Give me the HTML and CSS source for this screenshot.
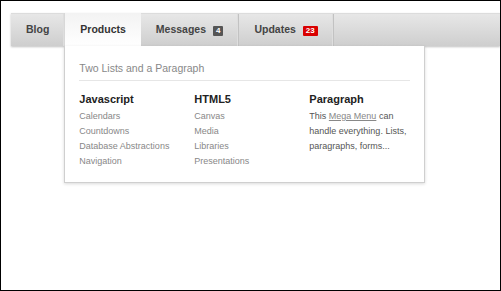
FILE: index.html
```html
<!DOCTYPE html>
<html lang="en">
<head>
    <meta charset="UTF-8">
    <title>Mega Menu</title>
    <link rel="stylesheet" href="styles.css">
</head>
<body>
    <div class="frame">
        <ul class="nav">
            <li class="nav-item">Blog</li>
            <li class="nav-item active">
                Products
                <div class="dropdown">
                    <h2 class="dropdown-title">Two Lists and a Paragraph</h2>
                    <div class="columns">
                        <div class="col">
                            <h3>Javascript</h3>
                            <ul class="links">
                                <li>Calendars</li>
                                <li>Countdowns</li>
                                <li>Database Abstractions</li>
                                <li>Navigation</li>
                            </ul>
                        </div>
                        <div class="col">
                            <h3>HTML5</h3>
                            <ul class="links">
                                <li>Canvas</li>
                                <li>Media</li>
                                <li>Libraries</li>
                                <li>Presentations</li>
                            </ul>
                        </div>
                        <div class="col">
                            <h3>Paragraph</h3>
                            <p class="text">This <a href="#">Mega Menu</a> can handle everything. Lists, paragraphs, forms...</p>
                        </div>
                    </div>
                </div>
            </li>
            <li class="nav-item">Messages <span class="badge">4</span></li>
            <li class="nav-item">Updates <span class="badge badge-red">23</span></li>
        </ul>
    </div>
</body>
</html>
```

FILE: styles.css
```css
* {
    margin: 0;
    padding: 0;
    box-sizing: border-box;
}

body {
    font-family: 'Liberation Sans', Arial, sans-serif;
    background: #fff;
}

.frame {
    width: 501px;
    height: 291px;
    border: 1px solid #000;
    padding: 12px 0 0 10px;
    overflow: hidden;
}

.nav {
    list-style: none;
    display: flex;
    height: 33px;
    background: linear-gradient(#e7e7e7, #cecece);
    border-top: 1px solid #dcdcdc;
    box-shadow: 0 1px 2px rgba(0,0,0,0.25);
}

.nav-item {
    position: relative;
    padding: 0 15px;
    height: 32px;
    line-height: 31px;
    font-size: 10.5px;
    font-weight: bold;
    color: #444;
    border-right: 1px solid #c2c2c2;
    box-shadow: inset -1px 0 0 #dedede;
    white-space: nowrap;
}

.nav-item.active {
    background: linear-gradient(#f3f3f3, #fff);
    color: #333;
    height: 33px;
    margin-top: -1px;
    line-height: 33px;
    padding: 0 15px;
    border-right: none;
    box-shadow: none;
    border-left: 1px solid #d8d8d8;
    margin-left: -1px;
    z-index: 2;
}

.badge {
    display: inline-block;
    margin-left: 4px;
    padding: 0 3px;
    height: 10px;
    line-height: 10px;
    font-size: 8px;
    font-weight: bold;
    color: #fff;
    background: #555;
    border-radius: 1px;
    vertical-align: 0;
}

.badge-red {
    background: #d90000;
}

.dropdown {
    position: absolute;
    top: 33px;
    left: -1px;
    width: 361px;
    background: #fff;
    border: 1px solid #cfcfcf;
    border-top: none;
    box-shadow: 0 1px 3px rgba(0,0,0,0.15);
    padding: 16px 14px 13px;
    line-height: normal;
    font-weight: normal;
    white-space: normal;
}

.dropdown-title {
    font-size: 10.5px;
    font-weight: normal;
    line-height: 13px;
    color: #888;
    padding-bottom: 5px;
    border-bottom: 1px solid #e6e6e6;
}

.columns {
    display: grid;
    grid-template-columns: 115px 115px 101px;
    margin-top: 11px;
}

.col h3 {
    font-size: 11px;
    line-height: 14px;
    color: #222;
    margin-bottom: 3px;
}

.links {
    list-style: none;
}

.links li {
    font-size: 9px;
    line-height: 15px;
    color: #888;
}

.text {
    font-size: 9px;
    line-height: 15px;
    color: #555;
    width: 100px;
}

.text a {
    color: #888;
}
```
